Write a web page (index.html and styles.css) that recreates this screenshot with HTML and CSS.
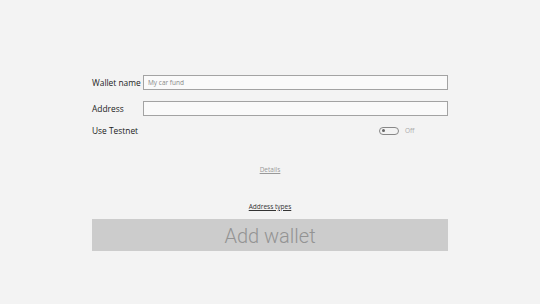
FILE: index.html
```html
<!DOCTYPE html>
<html lang="en">
<head>
    <meta charset="UTF-8">
    <meta name="viewport" content="width=device-width, initial-scale=1.0">
    <title>Add Wallet</title>
    <link rel="stylesheet" href="styles.css">
</head>
<body>
    <div class="form-container">
        <form id="add-wallet-form">
            <div class="form-group">
                <label for="name">Wallet name</label>
                <input type="text" id="name" name="name" placeholder="My car fund">
            </div>
            <div class="form-group">
                <label for="address">Address</label>
                <input type="text" id="address" name="address">
            </div>
            <div class="form-group toggle-group">
                <span class="label">Use Testnet</span>
                <div class="toggle">
                    <span class="switch"><span class="knob"></span></span>
                    <span class="toggle-text">Off</span>
                </div>
            </div>
            <div class="link-row details">
                <a href="#">Details</a>
            </div>
            <div class="link-row types">
                <a href="#">Address types</a>
            </div>
            <button type="submit" class="btn btn-add" disabled>Add wallet</button>
        </form>
    </div>
</body>
</html>
```

FILE: styles.css
```css
body {
    font-family: "Open Sans", "Noto Sans", sans-serif;
    margin: 0;
    background-color: #f3f3f3;
    color: #222;
}

.form-container {
    width: 356px;
    margin: 0 auto 0 92px;
    padding-top: 75px;
}

.form-group {
    display: flex;
    align-items: center;
    height: 15px;
    margin-bottom: 11px;
}

label, .label {
    width: 51px;
    font-size: 8.4px;
    white-space: nowrap;
}

input[type="text"] {
    flex: 1;
    height: 15px;
    padding: 0 4px;
    border: 1px solid #a3a3a3;
    background: #fafafa;
    box-sizing: border-box;
    font-family: inherit;
    font-size: 6.5px;
    outline: none;
}

input::placeholder {
    color: #888;
}

.toggle-group {
    justify-content: space-between;
    margin-top: -4px;
}

.toggle {
    display: flex;
    align-items: center;
    width: 69px;
}

.switch {
    width: 20px;
    height: 8px;
    border: 1px solid #888;
    border-radius: 5px;
    box-sizing: border-box;
    position: relative;
}

.knob {
    position: absolute;
    left: 2px;
    top: 1.5px;
    width: 3px;
    height: 3px;
    border-radius: 50%;
    background: #666;
}

.toggle-text {
    margin-left: 6px;
    font-size: 6.5px;
    color: #aaa;
}

.link-row {
    text-align: center;
    font-size: 6.5px;
}

.link-row a {
    color: #999;
}

.details {
    margin-top: 27px;
}

.types {
    margin-top: 28px;
}

.types a {
    color: #333;
}

.btn {
    display: block;
    width: 100%;
    height: 32px;
    margin-top: 8px;
    padding-top: 3px;
    border: none;
    font-family: Roboto, sans-serif;
    font-weight: 300;
    font-size: 20px;
}

.btn-add {
    background-color: #cccccc;
    color: #939393;
}
```
